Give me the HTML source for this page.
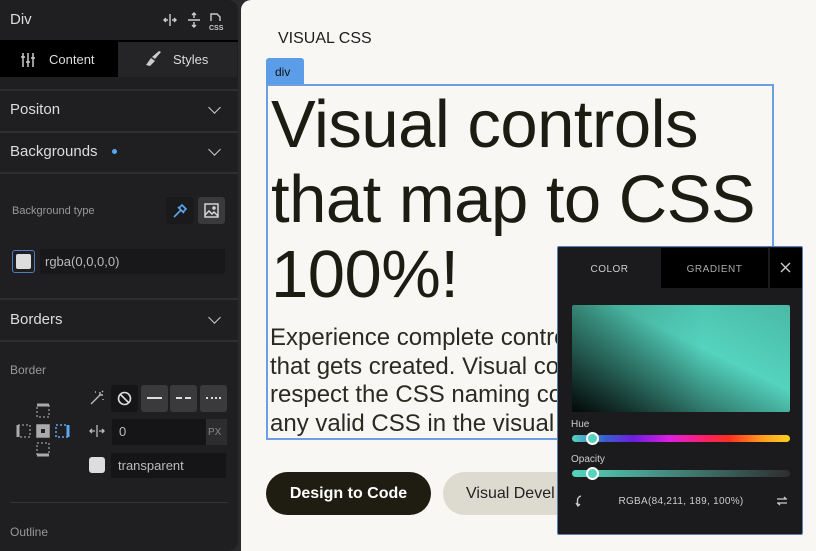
<!DOCTYPE html>
<html><head><meta charset="utf-8"><style>
*{box-sizing:border-box;margin:0;padding:0}
body{width:816px;height:551px;overflow:hidden;background:#2a2a2c;font-family:"Liberation Sans",sans-serif;position:relative}
.a{position:absolute}
#lp{left:0;top:0;width:238px;height:551px;background:#1f1f21;border-radius:0 10px 10px 0;color:#d8d8d8}
.sep{position:absolute;left:0;width:238px;height:2px;background:#2e2e31}
.h{font-size:15px;color:#dcdcdc}
.chev{width:9px;height:9px;border-right:1.8px solid #ccc;border-bottom:1.8px solid #ccc;transform:rotate(45deg)}
.lbl{font-size:12px;color:#999}
#cv{left:241px;top:0;width:575px;height:551px;background:#f8f7f4;border-radius:10px 0 0 0}
</style></head><body>
<div id="lp" class="a">
 <div class="a h" style="left:10px;top:11px;font-size:15px">Div</div>
 <svg class="a" style="left:162px;top:12px" width="70" height="20" viewBox="0 0 70 20" fill="none" stroke="#ccc" stroke-width="1.4">
  <path d="M8 2v12M2 8h4M10 8h4M4 6l-2 2 2 2M12 6l2 2-2 2"/>
  <path d="M26 8h12M32 1v5M32 10v5M30 3l2-2 2 2M30 13l2 2 2-2"/>
  <path d="M49 9V2h6l3 3v4"/>
  <text x="47" y="18" font-size="7" font-weight="bold" fill="#ccc" stroke="none" font-family="Liberation Sans">CSS</text>
 </svg>
 <div class="a" style="left:0;top:42px;width:118px;height:35px;background:#000"></div>
 <div class="a" style="left:118px;top:42px;width:119px;height:35px;background:#252527"></div>
 <div class="a" style="left:0;top:40px;width:238px;height:2px;background:#000"></div>
 <svg class="a" style="left:21px;top:53px" width="16" height="14" stroke="#ccc" stroke-width="1.5"><path d="M2 0v14M7 0v14M12 0v14M0 4h4M5 9h4M10 5h4"/></svg>
 <div class="a h" style="left:49px;top:52px;font-size:13px">Content</div>
 <svg class="a" style="left:145px;top:51px" width="18" height="16"><path d="M16 1l-6 7-3-2 7-6z" fill="#ccc"/><path d="M6 7l4 3-5 5-4-1z" fill="#ccc"/></svg>
 <div class="a h" style="left:173px;top:52px;font-size:13px">Styles</div>
 <div class="sep" style="top:89px"></div>
 <div class="a h" style="left:10px;top:101px">Positon</div>
 <div class="a chev" style="left:210px;top:103px"></div>
 <div class="sep" style="top:131px"></div>
 <div class="a h" style="left:10px;top:143px">Backgrounds</div>
 <div class="a" style="left:112px;top:149px;width:5px;height:5px;border-radius:50%;background:#5aa7f0"></div>
 <div class="a chev" style="left:210px;top:145px"></div>
 <div class="sep" style="top:172px"></div>
 <div class="a lbl" style="left:12px;top:205px;font-size:11px">Background type</div>
 <div class="a" style="left:166px;top:197px;width:28px;height:27px;background:#1a1a1c;border-radius:3px"></div>
 <svg class="a" style="left:172px;top:203px" width="16" height="16" fill="none" stroke="#5aa7f0" stroke-width="1.6"><path d="M2 14l7-7M6 4l6 6M10 2l4 4-3 3-4-4z"/></svg>
 <div class="a" style="left:198px;top:197px;width:27px;height:27px;background:#3a3a3d;border-radius:3px"></div>
 <svg class="a" style="left:204px;top:203px" width="15" height="15" fill="none" stroke="#ddd" stroke-width="1.4"><rect x="1" y="1" width="13" height="13"/><path d="M1 12l4-4 3 3 2-2 4 4"/><circle cx="10" cy="5" r="1"/></svg>
 <div class="a" style="left:12px;top:250px;width:23px;height:23px;border:1.5px solid #4d7fc0;border-radius:3px;padding:3px"><div style="width:100%;height:100%;background:#ddd;border-radius:2px"></div></div>
 <div class="a" style="left:40px;top:249px;width:185px;height:25px;background:#18181a;border-radius:2px"></div>
 <div class="a" style="left:45px;top:254px;font-size:13px;color:#bbb">rgba(0,0,0,0)</div>
 <div class="sep" style="top:298px"></div>
 <div class="a h" style="left:10px;top:311px">Borders</div>
 <div class="a chev" style="left:210px;top:313px"></div>
 <div class="sep" style="top:340px"></div>
 <div class="a lbl" style="left:10px;top:363px">Border</div>
 <svg class="a" style="left:14px;top:403px" width="60" height="56" fill="none" stroke-width="1.5">
  <rect x="23" y="2" width="12" height="12" stroke="#888" stroke-dasharray="2 2"/><path d="M23 2h12" stroke="#aaa" stroke-width="3"/>
  <rect x="23" y="40" width="12" height="12" stroke="#888" stroke-dasharray="2 2"/><path d="M23 52h12" stroke="#aaa" stroke-width="3"/>
  <rect x="4" y="22" width="12" height="12" stroke="#888" stroke-dasharray="2 2"/><path d="M4 22v12" stroke="#aaa" stroke-width="3"/>
  <rect x="42" y="22" width="12" height="12" stroke="#5aa7f0" stroke-dasharray="2 2"/><path d="M54 22v12" stroke="#5aa7f0" stroke-width="3"/>
  <rect x="23" y="22" width="12" height="12" fill="#aaa" stroke="#aaa"/><rect x="27" y="26" width="4" height="4" fill="#222" stroke="none"/>
 </svg>
 <svg class="a" style="left:89px;top:390px" width="16" height="16" stroke="#bbb" stroke-width="1.4"><path d="M2 14l9-9M11 2v3M14 5h-3M13 1l1 1M6 2h1M14 9v1"/></svg>
 <div class="a" style="left:111px;top:385px;width:27px;height:27px;background:#151517;border-radius:3px"></div>
 <svg class="a" style="left:117px;top:391px" width="15" height="15" fill="none" stroke="#ddd" stroke-width="1.6"><circle cx="7.5" cy="7.5" r="6"/><path d="M3.5 3.5l8 8"/></svg>
 <div class="a" style="left:141px;top:385px;width:27px;height:27px;background:#3a3a3d;border-radius:3px"></div>
 <div class="a" style="left:147px;top:397px;width:15px;height:2px;background:#ddd"></div>
 <div class="a" style="left:170px;top:385px;width:27px;height:27px;background:#3a3a3d;border-radius:3px"></div>
 <div class="a" style="left:176px;top:397px;width:6px;height:2px;background:#ddd"></div><div class="a" style="left:185px;top:397px;width:6px;height:2px;background:#ddd"></div>
 <div class="a" style="left:200px;top:385px;width:27px;height:27px;background:#3a3a3d;border-radius:3px"></div>
 <div class="a" style="left:206px;top:397px;width:15px;height:2px;border-top:2px dotted #ddd"></div>
 <svg class="a" style="left:89px;top:425px" width="16" height="12" stroke="#bbb" stroke-width="1.3" fill="none"><path d="M8 0v12M1 6h5M10 6h5M3 4l-2 2 2 2M13 4l2 2-2 2"/></svg>
 <div class="a" style="left:112px;top:419px;width:94px;height:26px;background:#151517"></div>
 <div class="a" style="left:206px;top:419px;width:21px;height:26px;background:#2d2d30"></div>
 <div class="a" style="left:208px;top:427px;font-size:10px;color:#888">PX</div>
 <div class="a" style="left:119px;top:424px;font-size:13px;color:#bbb">0</div>
 <div class="a" style="left:89px;top:457px;width:16px;height:16px;background:#ddd;border-radius:3px"></div>
 <div class="a" style="left:111px;top:453px;width:115px;height:25px;background:#151517"></div>
 <div class="a" style="left:118px;top:458px;font-size:13px;color:#bbb">transparent</div>
 <div class="a" style="left:10px;top:502px;width:218px;height:1px;background:#333"></div>
 <div class="a lbl" style="left:10px;top:525px">Outline</div>
</div>
<div id="cv" class="a">
 <div class="a" style="left:37px;top:30px;font-size:16px;color:#1e1e1e">VISUAL CSS</div>
 <div class="a" style="left:25px;top:58px;width:38px;height:27px;background:#5b9de8;border-radius:3px 3px 0 0;font-size:12px;color:#111;padding:7px 0 0 9px">div</div>
 <div class="a" style="left:25px;top:84px;width:508px;height:356px;border:2px solid #6aa0e0"></div>
 <div class="a" style="left:30px;top:87px;width:560px;font-size:67px;line-height:75px;color:#1d1c12;letter-spacing:-0.5px;white-space:nowrap">Visual controls<br>that map to CSS<br>100%!</div>
 <div class="a" style="left:29px;top:324px;font-size:24px;line-height:28.5px;color:#2b2a22;white-space:nowrap;overflow:hidden;width:300px">Experience complete control<br>that gets created. Visual controls<br>respect the CSS naming conv<br>any valid CSS in the visual</div>
 <div class="a" style="left:25px;top:472px;width:165px;height:43px;border-radius:22px;background:#1f1c11;color:#fff;font-size:16px;font-weight:bold;text-align:center;line-height:43px">Design to Code</div>
 <div class="a" style="left:202px;top:472px;width:150px;height:43px;border-radius:22px 0 0 22px;background:#dddbd0;color:#222;font-size:16px;padding:13px 0 0 23px">Visual Devel</div>
</div>
<div class="a" style="left:557px;top:246px;width:246px;height:289px;background:#1b1b1d;border:1px solid #5a7fb5;border-radius:2px">
 <div class="a" style="left:103px;top:1px;width:107px;height:40px;background:#000"></div>
 <div class="a" style="left:212px;top:1px;width:32px;height:40px;background:#000"></div>
 <div class="a" style="left:0;top:17px;width:103px;text-align:center;font-size:10px;color:#ccc;letter-spacing:.5px">COLOR</div>
 <div class="a" style="left:103px;top:17px;width:107px;text-align:center;font-size:10px;color:#aaa;letter-spacing:.5px">GRADIENT</div>
 <svg class="a" style="left:222px;top:15px" width="11" height="11" stroke="#ccc" stroke-width="1.4"><path d="M1 1l9 9M10 1l-9 9"/></svg>
 <div class="a" style="left:14px;top:58px;width:218px;height:107px;border-radius:2px;background:linear-gradient(to top right,rgba(0,0,0,.95) 0%,rgba(0,0,0,.45) 30%,rgba(0,0,0,0) 60%,rgba(0,0,0,.12) 100%),linear-gradient(to right,#3e9c8a,#54d3bd 60%)"></div>
 <div class="a" style="left:13px;top:172px;font-size:10px;color:#ccc">Hue</div>
 <div class="a" style="left:14px;top:188px;width:218px;height:7px;border-radius:4px;background:linear-gradient(to right,#54d3bd 0%,#3a5fd0 15%,#6a1ee0 28%,#e01ee0 45%,#ff2060 62%,#ff3020 72%,#ffa020 88%,#ffd020 100%)"></div>
 <div class="a" style="left:28px;top:185px;width:13px;height:13px;border-radius:50%;background:#54d3bd;border:2px solid #fff"></div>
 <div class="a" style="left:13px;top:207px;font-size:10px;color:#ccc">Opacity</div>
 <div class="a" style="left:14px;top:223px;width:218px;height:7px;border-radius:4px;background:linear-gradient(to right,#54d3bd,#2e2e2e)"></div>
 <div class="a" style="left:28px;top:220px;width:13px;height:13px;border-radius:50%;background:#54d3bd;border:2px solid #fff"></div>
 <svg class="a" style="left:16px;top:248px" width="9" height="12" stroke="#ccc" stroke-width="1.3" fill="none"><path d="M7 1C3 2 3 6 4 10M2 8l2 3 2-2"/></svg>
 <div class="a" style="left:0;top:249px;width:246px;text-align:center;font-size:10px;color:#ccc;letter-spacing:.3px">RGBA(84,211, 189, 100%)</div>
 <svg class="a" style="left:218px;top:249px" width="12" height="10" stroke="#ccc" stroke-width="1.3" fill="none"><path d="M1 3h10M8 1l2 2M11 7H1M4 9L2 7"/></svg>
</div>
</body></html>
